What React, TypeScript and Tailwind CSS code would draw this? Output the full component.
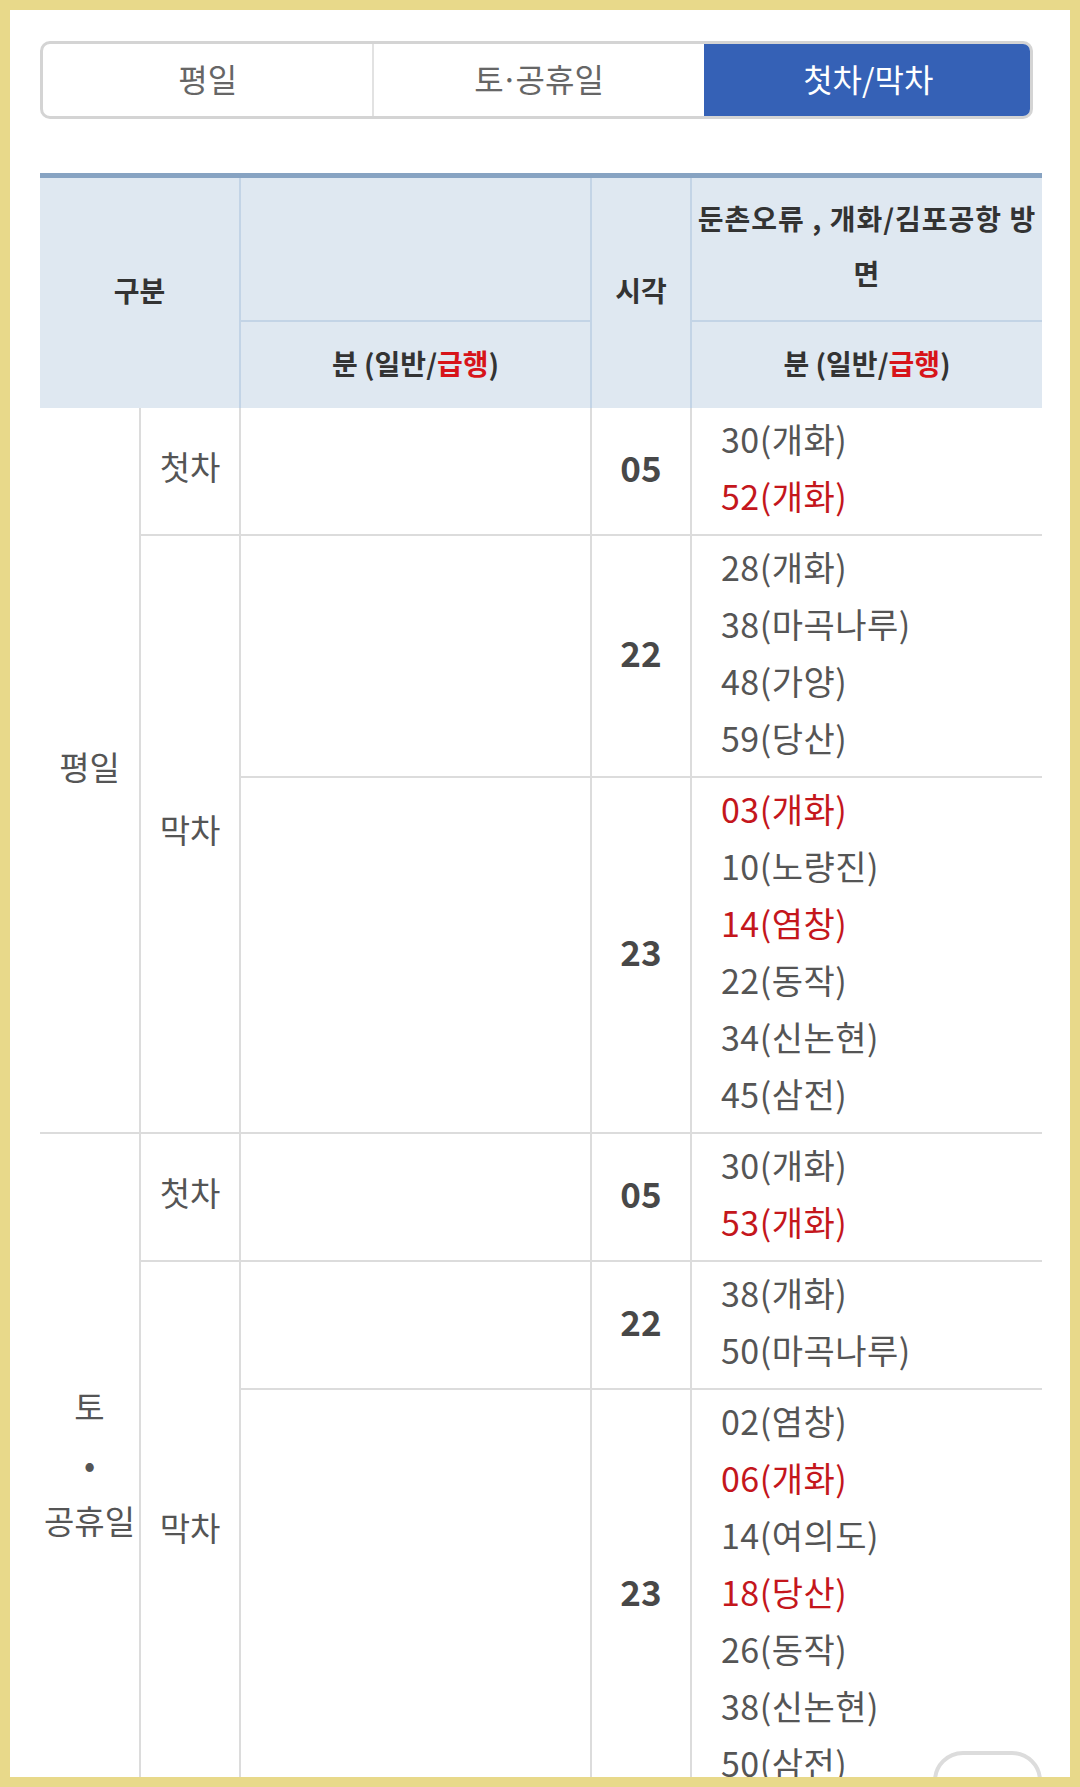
import React from 'react';

type Item = { t: string; red?: boolean };

interface Slot {
    hour: string;
    items: Item[];
}

interface Group {
    day: React.ReactNode;
    first: Slot[];
    last: Slot[];
}

const groups: Group[] = [
    {
        day: '평일',
        first: [{ hour: '05', items: [{ t: '30(개화)' }, { t: '52(개화)', red: true }] }],
        last: [
            { hour: '22', items: [{ t: '28(개화)' }, { t: '38(마곡나루)' }, { t: '48(가양)' }, { t: '59(당산)' }] },
            {
                hour: '23',
                items: [
                    { t: '03(개화)', red: true },
                    { t: '10(노량진)' },
                    { t: '14(염창)', red: true },
                    { t: '22(동작)' },
                    { t: '34(신논현)' },
                    { t: '45(삼전)' },
                ],
            },
        ],
    },
    {
        day: (
            <>
                <div>토</div>
                <div>•</div>
                <div>공휴일</div>
            </>
        ),
        first: [{ hour: '05', items: [{ t: '30(개화)' }, { t: '53(개화)', red: true }] }],
        last: [
            { hour: '22', items: [{ t: '38(개화)' }, { t: '50(마곡나루)' }] },
            {
                hour: '23',
                items: [
                    { t: '02(염창)' },
                    { t: '06(개화)', red: true },
                    { t: '14(여의도)' },
                    { t: '18(당산)', red: true },
                    { t: '26(동작)' },
                    { t: '38(신논현)' },
                    { t: '50(삼전)' },
                ],
            },
        ],
    },
];

const cellB = 'border-b-2 border-b-[#dcdcdc]';
const cellL = 'border-l-2 border-l-[#dcdcdc]';

const Minutes: React.FC<{ items: Item[] }> = ({ items }) => (
    <td className={`${cellL} ${cellB} pl-[29px] pt-[2px] pb-[10px] text-left align-middle text-[34px] leading-[57px] tracking-[0.5px]`}>
        {items.map((it, i) => (
            <div key={i} className={it.red ? 'text-[#c4161c]' : 'text-[#555]'}>
                {it.t}
            </div>
        ))}
    </td>
);

const SlotCells: React.FC<{ slot: Slot }> = ({ slot }) => (
    <>
        <td className={`${cellL} ${cellB}`}></td>
        <td className={`${cellL} ${cellB} pb-[7px] text-center text-[35px] font-bold text-[#484848]`}>{slot.hour}</td>
        <Minutes items={slot.items} />
    </>
);

const GroupRows: React.FC<{ group: Group }> = ({ group }) => {
    const total = group.first.length + group.last.length;
    return (
        <>
            {group.first.map((s, i) => (
                <tr key={`f${i}`}>
                    {i === 0 && (
                        <td rowSpan={total} className={`${cellB} pb-[7px] text-center text-[33px] leading-[57px] text-[#555]`}>
                            {group.day}
                        </td>
                    )}
                    {i === 0 && (
                        <td rowSpan={group.first.length} className={`${cellL} ${cellB} pb-[7px] text-center text-[33px] text-[#555]`}>
                            첫차
                        </td>
                    )}
                    <SlotCells slot={s} />
                </tr>
            ))}
            {group.last.map((s, i) => (
                <tr key={`l${i}`}>
                    {i === 0 && (
                        <td rowSpan={group.last.length} className={`${cellL} ${cellB} pb-[7px] text-center text-[33px] text-[#555]`}>
                            막차
                        </td>
                    )}
                    <SlotCells slot={s} />
                </tr>
            ))}
        </>
    );
};

const MinuteHead = () => (
    <span>
        분 (일반/<span className="text-[#d7141a]">급행</span>)
    </span>
);

export default function App() {
    const active = 2;
    return (
        <div className="h-[1787px] bg-[#e8d98a] p-[10px] font-['Noto_Sans_CJK_KR',sans-serif]">
            <div className="relative h-full overflow-hidden bg-white pl-[30px] pt-[31px]">
                {/* tab bar */}
                <div className="flex h-[78px] w-[993px] overflow-hidden rounded-[10px] border-[3px] border-[#d4d4d4]">
                    <div className="flex flex-1 items-center justify-center pb-[5px] text-[32px] text-[#666]">평일</div>
                    <div className="flex flex-1 items-center justify-center border-l-2 border-l-[#e2e2e2] pb-[5px] text-[32px] text-[#666]">
                        토<span className="-mx-[3px]">·</span>공휴일
                    </div>
                    <div
                        className={`-my-[3px] -mr-[3px] flex flex-1 items-center justify-center pb-[5px] text-[32px] ${
                            active === 2 ? 'bg-[#3561b6] text-white' : 'text-[#666]'
                        }`}
                    >
                        첫차/막차
                    </div>
                </div>

                <table className="mt-[54px] w-[1002px] table-fixed border-collapse border-t-[5px] border-t-[#87a3c2]">
                    <colgroup>
                        <col className="w-[100px]" />
                        <col className="w-[100px]" />
                        <col className="w-[351px]" />
                        <col className="w-[100px]" />
                        <col className="w-[351px]" />
                    </colgroup>
                    <thead className="bg-[#dfe8f1] text-[28px] font-bold text-[#333]">
                        <tr>
                            <th colSpan={2} rowSpan={2} className="pb-[6px] font-bold">
                                구분
                            </th>
                            <th className="h-[145px] border-b-2 border-l-2 border-[#c3d4e6]"></th>
                            <th rowSpan={2} className="border-l-2 border-[#c3d4e6] pb-[6px]">
                                시각
                            </th>
                            <th className="h-[145px] whitespace-nowrap border-b-2 border-l-2 border-[#c3d4e6] pb-[6px] leading-[55px] tracking-[1px]">
                                둔촌오류 , 개화/김포공항 방<br />면
                            </th>
                        </tr>
                        <tr>
                            <th className="h-[87px] border-l-2 border-[#c3d4e6] pb-[4px]">
                                <MinuteHead />
                            </th>
                            <th className="h-[87px] border-l-2 border-[#c3d4e6] pb-[4px]">
                                <MinuteHead />
                            </th>
                        </tr>
                    </thead>
                    <tbody>
                        {groups.map((g, i) => (
                            <GroupRows key={i} group={g} />
                        ))}
                    </tbody>
                </table>

                {/* floating top button */}
                <div className="absolute left-[923px] top-[1741px] h-[80px] w-[109px] rounded-[30px] border-4 border-[#dcdcdc] bg-white"></div>
            </div>
        </div>
    );
}
